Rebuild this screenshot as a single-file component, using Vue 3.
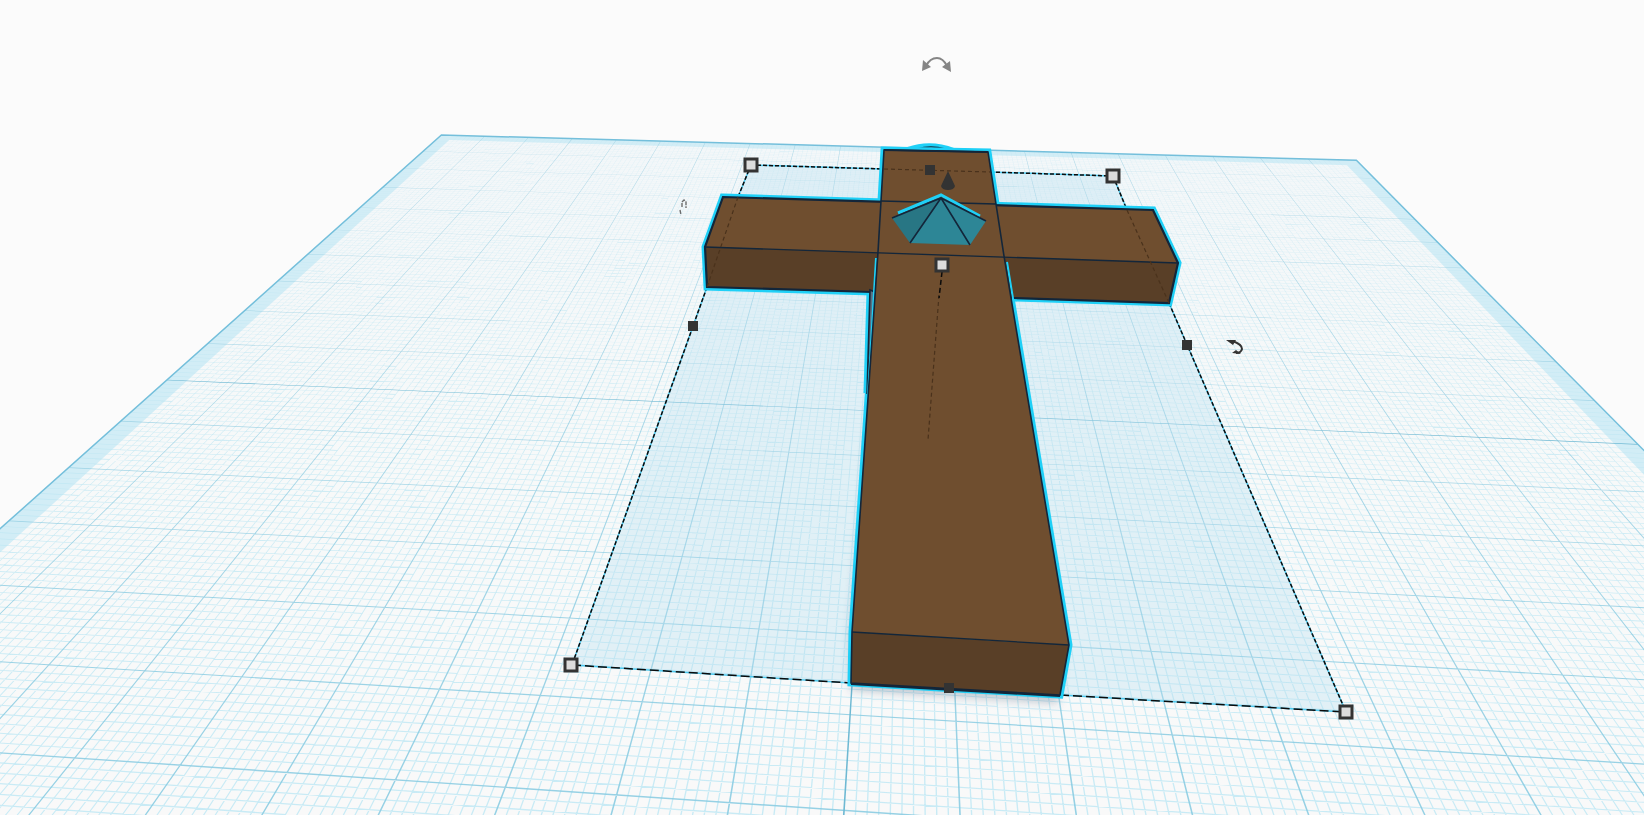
<template>
  <main class="viewport">
    <svg
      class="scene"
      viewBox="0 0 1644 815"
      preserveAspectRatio="xMidYMid slice"
      role="img"
      aria-label="Workplane with selected cross"
    >
      <defs>
        <linearGradient id="haze" x1="0" y1="135" x2="0" y2="815" gradientUnits="userSpaceOnUse">
          <stop offset="0" stop-color="#f3f7f9" />
          <stop offset="0.5" stop-color="#f7f9f9" />
          <stop offset="1" stop-color="#f9f9f9" />
        </linearGradient>
        <linearGradient id="minor" x1="0" y1="135" x2="0" y2="815" gradientUnits="userSpaceOnUse">
          <stop offset="0" stop-color="#b8e2f0" stop-opacity="0.3" />
          <stop offset="0.4" stop-color="#b8e4f1" stop-opacity="0.6" />
          <stop offset="1" stop-color="#b8e6f4" stop-opacity="0.75" />
        </linearGradient>
        <linearGradient id="major" x1="0" y1="135" x2="0" y2="815" gradientUnits="userSpaceOnUse">
          <stop offset="0" stop-color="#8fcadf" stop-opacity="0.6" />
          <stop offset="1" stop-color="#8acce2" stop-opacity="0.9" />
        </linearGradient>
        <filter id="soft" x="-20%" y="-20%" width="140%" height="140%">
          <feGaussianBlur stdDeviation="5" />
        </filter>
      </defs>

      <!-- workplane -->
      <path class="plane-band" :d="outer" />
      <path class="plane" :d="inner" />
      <path class="grid-minor" :d="minorLines" />
      <path class="grid-major" :d="majorLines" />
      <path class="grid-center" :d="centerLines" />
      <path class="plane-edge" :d="outer" />

      <!-- selected footprint -->
      <path class="footprint" d="M751 165L1113 176L1346 712L572 665Z" />
      <path class="shadow" d="M872 400L850 640L851 690L1058 703L1062 650Z" filter="url(#soft)" />
      <path class="dash-base" :d="sideEdges" />
      <path class="dash" :d="sideEdges" />
      <path class="dash-base" :d="frontEdges" />
      <path class="dash dash-front" :d="frontEdges" />

      <!-- ring behind the post -->
      <path class="ring" d="M908 149Q930 141 954 150" />
      <path class="edge" d="M917 149Q931 145 945 149" />

      <!-- cross -->
      <g class="halo">
        <path :d="postOutline" />
        <path :d="armOutline" />
        <path d="M870 292L867 393L876 292Z" />
      </g>
      <path class="wood-dark" :d="armOutline" />
      <path class="wood" d="M723 197L1153 210L1178 263L705 247Z" />
      <path class="edge outline" :d="armOutline" />
      <path class="gap" d="M870 290L867 394L875 292Z" />
      <path class="halo-line" d="M876 258L863 480M1007 262L1040 463" />
      <path class="wood" d="M884 150L988 152L1004 256L1069 645L852 632L878 252Z" />
      <path class="wood-dark" d="M852 632L1069 645L1060 695L851 683Z" />
      <path class="edge" :d="postOutline" />
      <path class="edge outline" d="M884 150L988 152" />
      <path class="edge thin" d="M852 632L1069 645M881 201L996 204M705 247L1178 263" />

      <!-- gem -->
      <path class="gem-dark" d="M941 197L892 218L910 243Z" />
      <path class="gem" d="M941 197L910 243L970 245L986 221Z" />
      <path class="gem-halo" d="M898 213L941 195L980 216" />
      <path class="edge" d="M892 218L941 198L986 221M910 243L941 198L970 245" />

      <!-- hidden part of the selection box -->
      <path class="dash-hidden" d="M884 169L990 172M738 197L707 287M1127 210L1169 303M939 295L928 440" />
      <path class="dash-lift" d="M942 272L939 298" />
      <path class="edge outline" d="M851 684L1060 696" />

      <!-- manipulators -->
      <rect
        v-for="h in corners"
        :key="`c${h.x}`"
        class="handle-corner"
        :x="h.x - 6"
        :y="h.y - 6"
        width="12"
        height="12"
      />
      <rect
        v-for="h in mids"
        :key="`m${h.x}`"
        class="handle-mid"
        :x="h.x - 5"
        :y="h.y - 5"
        width="10"
        height="10"
      />
      <path class="handle-mid" d="M948 171L955 186Q954 190 948 190Q942 190 941 186Z" />

      <g class="rotate-top">
        <path class="arc" d="M926 66Q930 58 937 58Q943 58 947 66" />
        <path class="tip" d="M922 71L923 60L931 67ZM951 72L942 67L950 61Z" />
      </g>
      <g class="rotate-side">
        <path class="arc" d="M1232 341Q1242 344 1242 349Q1241 353 1236 353" />
        <path class="tip" d="M1226 340L1236 340L1233 345ZM1232 353L1236 350L1241 354Z" />
      </g>
      <path class="rotate-far" d="M682 207L682 202L684 200L686 202L686 208M680 210L681 215" />
    </svg>
  </main>
</template>

<script setup>
// Plane coordinates: u runs 0..20 left to right, v runs 0..20 back to front
const SIZE = 20
const BAND = 0.3

function project(u, v) {
  const s = u / 20
  const t = v / 10
  const w = 1 - 0.05409 * s - 0.36763 * t
  const x = (841.63 * s - 335.92 * t + 441.4) / w
  const y = (16.63 * s + 105.3 * t + 135) / w
  return `${x.toFixed(2)} ${y.toFixed(2)}`
}

function quad(u0, v0, u1, v1) {
  return `M${project(u0, v0)}L${project(u1, v0)}L${project(u1, v1)}L${project(u0, v1)}Z`
}

// Lines are thin strips on the plane, so they fade with distance
function strips(positions, width) {
  const half = width / 2
  return positions
    .map((p) => quad(p - half, 0, p + half, SIZE) + quad(0, p - half, SIZE, p + half))
    .join('')
}

const minor = []
const major = []
for (let i = 4; i < SIZE * 10 - 3; i++) {
  if (i % 10) {
    minor.push(i / 10)
  } else if (i !== 100) {
    major.push(i / 10)
  }
}

const outer = quad(0, 0, SIZE, SIZE)
const inner = quad(BAND, BAND, SIZE - BAND, SIZE - BAND)
const minorLines = strips(minor, 0.012)
const majorLines = strips(major, 0.014)
const centerLines = strips([10], 0.014)

const sideEdges =
  'M751 165L884 169M990 172L1113 176M751 165L738 197M707 287L572 665' +
  'M1113 176L1127 210M1169 303L1346 712'
const frontEdges = 'M572 665L851 683M1060 695L1346 712'
const postOutline = 'M884 150L988 152L1004 256L1069 645L1060 695L851 683L852 632L878 252Z'
const armOutline = 'M723 197L1153 210L1178 263L1169 303L1014 298L872 292L707 287L705 247Z'

const corners = [
  { x: 751, y: 165 },
  { x: 1113, y: 176 },
  { x: 571, y: 665 },
  { x: 1346, y: 712 },
  { x: 942, y: 265 }
]
const mids = [
  { x: 930, y: 170 },
  { x: 693, y: 326 },
  { x: 1187, y: 345 },
  { x: 949, y: 688 }
]
</script>

<style>
body {
  margin: 0;
  background: #fbfbfb;
}
</style>

<style scoped>
.viewport {
  width: 100%;
  height: 100vh;
  overflow: hidden;
  background: #fbfbfb;
}

.scene {
  display: block;
  width: 100%;
  height: 100%;
}

.scene path { fill: none; }

.scene .plane { fill: url(#haze); }
.scene .plane-band { fill: #d2edf6; }
.plane-edge { stroke: #74bfdb; stroke-width: 1.5; }
.scene .grid-minor { fill: url(#minor); }
.scene .grid-major { fill: url(#major); }
.scene .grid-center { fill: #6fb9d3; }

.scene .footprint { fill: rgba(178, 220, 238, 0.32); }
.scene .shadow { fill: rgba(60, 80, 110, 0.3); }

.dash-base { stroke: #4cc9ef; stroke-width: 1.5; }
.dash { stroke: #0b0b0b; stroke-width: 1.5; stroke-dasharray: 4 2; }
.dash-front { stroke-dasharray: 9 4; }
.dash-hidden { stroke: #4a321c; stroke-width: 1.2; stroke-dasharray: 4 3; }
.dash-lift { stroke: #0b0b0b; stroke-width: 1.5; stroke-dasharray: 5 3; }

.ring { stroke: #1fd0f7; stroke-width: 4; }
.scene .halo path { fill: #1fd0f7; stroke: #1fd0f7; stroke-width: 7; }
.halo-line { stroke: #1fd0f7; stroke-width: 2; }
.edge { stroke: #13263a; stroke-width: 1.6; }
.thin { stroke-width: 1.3; }
.outline { stroke-width: 2.2; }
.scene .gap { fill: #5a7183; stroke: #13263a; stroke-width: 1.6; }

.scene .wood { fill: #6f4e2f; }
.scene .wood-dark { fill: #593f27; }

.scene .gem { fill: #2d8696; }
.scene .gem-dark { fill: #287684; }
.gem-halo { stroke: #1fd0f7; stroke-width: 3; }

.handle-corner { fill: #dcdcdc; stroke: #333; stroke-width: 3; }
.scene .handle-mid { fill: #333; }

.rotate-top .arc { stroke: #858585; stroke-width: 2; }
.scene .rotate-top .tip { fill: #858585; }
.rotate-side .arc { stroke: #333; stroke-width: 2; }
.scene .rotate-side .tip { fill: #333; }
.rotate-far { stroke: #6c6c6c; stroke-width: 1.4; stroke-dasharray: 4 1; }
</style>
